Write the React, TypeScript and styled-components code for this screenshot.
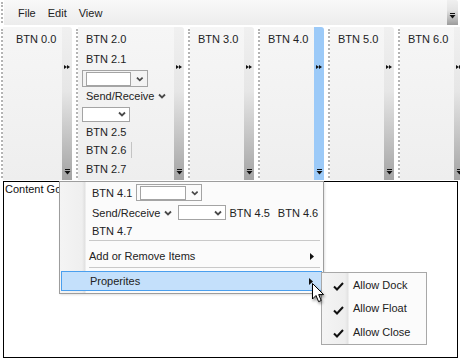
import React from "react";
import styled, { createGlobalStyle } from "styled-components";

const GlobalStyle = createGlobalStyle`
  html, body {
    margin: 0;
    padding: 0;
    background: #fff;
  }
  body {
    font-family: "Liberation Sans", Arial, sans-serif;
    font-size: 11px;
    color: #222;
  }
`;

const Page = styled.div`
  position: relative;
  width: 460px;
  height: 360px;
  overflow: hidden;
  background: #fff;
`;

/* ---------- menu bar ---------- */

const MenuBarRow = styled.div`
  display: flex;
  width: 458px;
  height: 25px;
`;

const Grip = styled.div`
  flex: 0 0 0;
  margin: 2px 0 2px 1px;
  border-left: 2px dotted #b4b4b4;
`;

const MenuBody = styled.div`
  flex: 1;
  display: flex;
  align-items: center;
  margin-left: 1px;
  padding-left: 8px;
  background: linear-gradient(#f9f9f9, #ececec);
`;

const MenuItem = styled.span`
  padding: 0 6px;
  line-height: 22px;
`;

const OverflowButton = styled.div`
  flex: 0 0 11px;
  display: flex;
  align-items: flex-end;
  justify-content: center;
  padding-bottom: 6px;
  box-sizing: border-box;
  border-radius: 0 2px 0 0;
  background: linear-gradient(#f0f0f0, #e4e4e4 40%, #9c9c9c);
`;

/* ---------- toolbars ---------- */

const Tray = styled.div`
  display: flex;
  gap: 3px;
  height: 153px;
  margin-top: 2px;
`;

const Toolbar = styled.div<{ $w: number }>`
  display: flex;
  flex: 0 0 ${(p) => p.$w}px;
`;

const ToolbarBody = styled.div<{ $inset: number }>`
  flex: 1;
  display: flex;
  flex-direction: column;
  padding: 2px 0 0 ${(p) => p.$inset}px;
  margin-left: 0;
  background: linear-gradient(#f6f6f6, #eeeeee);
`;

const OverflowColumn = styled.div<{ $active?: boolean }>`
  flex: 0 0 10px;
  display: flex;
  flex-direction: column;
  align-items: center;
  justify-content: space-between;
  padding: 38px 0 5px;
  box-sizing: border-box;
  border-radius: 0 3px 0 0;
  background: ${(p) =>
    p.$active
      ? "#9ccaf8"
      : "linear-gradient(#f0f0f0, #e6e6e6 42%, #a4a4a4)"};
`;

const Btn = styled.div<{ $h?: number }>`
  display: flex;
  align-items: center;
  gap: 3px;
  height: ${(p) => p.$h ?? 19}px;
  padding: 0 4px;
  white-space: nowrap;
`;

const ItemRow = styled.div<{ $h: number }>`
  display: flex;
  align-items: center;
  height: ${(p) => p.$h}px;
`;

const VSep = styled.span`
  width: 1px;
  height: 16px;
  margin-left: 2px;
  background: #c4c4c4;
`;

const ComboFrame = styled.div`
  display: flex;
  align-items: center;
  gap: 5px;
  width: 66px;
  height: 17px;
  box-sizing: border-box;
  padding: 0 3px;
  border: 1px solid #a4a4a4;
`;

const ComboInput = styled.div`
  width: 46px;
  height: 12px;
  background: #fff;
  border: 1px solid #a4a4a4;
`;

const SelectBox = styled.div`
  display: flex;
  align-items: center;
  justify-content: flex-end;
  width: 48px;
  height: 15px;
  box-sizing: border-box;
  padding-right: 3px;
  background: #fff;
  border: 1px solid #a4a4a4;
`;

/* ---------- content ---------- */

const Content = styled.div`
  height: 177px;
  margin: 1px 2px 0 3px;
  box-sizing: border-box;
  border: 1px solid #000;
  padding: 1px 0 0 1px;
  color: #111;
  line-height: 13px;
`;

/* ---------- overflow popup ---------- */

const Popup = styled.div`
  position: absolute;
  left: 59px;
  top: 181px;
  width: 265px;
  box-sizing: border-box;
  border: 1px solid #9d9d9d;
  padding-bottom: 2px;
  background: linear-gradient(
      to right,
      #f4f4f4 0,
      #efefef 22px,
      #e0e0e0 25px,
      #fbfbfb 26px
    );
  box-shadow: 1px 1px 2px rgba(0, 0, 0, 0.12);
`;

const PopupRows = styled.div`
  padding: 0 0 0 28px;
`;

const PopupSep = styled.div`
  height: 1px;
  margin: 0 3px 0 29px;
  background: #c9c9c9;
`;

const PopupItem = styled.div<{ $hot?: boolean }>`
  display: flex;
  align-items: center;
  justify-content: space-between;
  box-sizing: border-box;
  height: ${(p) => (p.$hot ? 20 : 26)}px;
  margin: ${(p) => (p.$hot ? "3px 1px 0" : "0")};
  padding: ${(p) => (p.$hot ? "0 8px 0 28px" : "4px 9px 0 29px")};
  border: ${(p) => (p.$hot ? "1px solid #4a9fee" : "none")};
  background: ${(p) => (p.$hot ? "#c4e0fb" : "transparent")};
`;

const SubMenu = styled.div`
  position: absolute;
  left: 321px;
  top: 272px;
  width: 106px;
  box-sizing: border-box;
  border: 1px solid #a8a8a8;
  background: linear-gradient(
      to right,
      #f4f4f4 0,
      #eeeeee 23px,
      #e2e2e2 26px,
      #fbfbfb 27px
    );
`;

const SubItem = styled.div`
  display: flex;
  align-items: center;
  height: 24px;
  margin-top: -0.5px;
`;

const CheckCell = styled.span`
  flex: 0 0 31px;
  display: flex;
  justify-content: center;
  padding-top: 4px;
  padding-left: 2px;
  box-sizing: border-box;
`;

const Cursor = styled.svg`
  position: absolute;
  left: 311px;
  top: 282px;
  filter: drop-shadow(1px 2px 1.5px rgba(0, 0, 0, 0.45));
`;

/* ---------- glyphs ---------- */

const Chevron = () => (
  <svg width="8" height="6" viewBox="0 0 8 6">
    <polyline points="1,1.5 4,4.5 7,1.5" fill="none" stroke="#4a4a4a" strokeWidth="1.8" />
  </svg>
);

const MoreGlyph = () => (
  <svg width="6" height="4" viewBox="0 0 6 4">
    <polygon points="0,0 3,2 0,4" fill="#111" />
    <polygon points="3,0 6,2 3,4" fill="#111" />
  </svg>
);

const DropGlyph = () => (
  <svg width="7" height="6" viewBox="0 0 7 6">
    <rect x="1" y="0" width="5" height="1" fill="#111" />
    <polygon points="0.5,2 6.5,2 3.5,5.5" fill="#111" />
  </svg>
);

const SubArrow = () => (
  <svg width="4" height="7" viewBox="0 0 4 7">
    <polygon points="0,0 4,3.5 0,7" fill="#111" />
  </svg>
);

const Check = () => (
  <svg width="11" height="9" viewBox="0 0 11 9">
    <polyline points="1,4.5 4,7.5 10,1" fill="none" stroke="#111" strokeWidth="2" />
  </svg>
);

const Combo = () => (
  <ComboFrame>
    <ComboInput />
    <Chevron />
  </ComboFrame>
);

const Select = () => (
  <SelectBox>
    <Chevron />
  </SelectBox>
);

const Column = ({ active }: { active?: boolean }) => (
  <OverflowColumn $active={active}>
    <MoreGlyph />
    <DropGlyph />
  </OverflowColumn>
);

const simpleBars = [
  { w: 67, label: "BTN 3.0" },
  { w: 67, label: "BTN 4.0", active: true },
  { w: 67, label: "BTN 5.0" },
  { w: 67, label: "BTN 6.0" },
];

export default function App() {
  return (
    <Page>
      <GlobalStyle />

      <MenuBarRow>
        <Grip />
        <MenuBody>
          <MenuItem>File</MenuItem>
          <MenuItem>Edit</MenuItem>
          <MenuItem>View</MenuItem>
        </MenuBody>
        <OverflowButton>
          <DropGlyph />
        </OverflowButton>
      </MenuBarRow>

      <Tray>
        <Toolbar $w={72}>
          <Grip />
          <ToolbarBody $inset={9}>
            <Btn $h={20}>BTN 0.0</Btn>
          </ToolbarBody>
          <Column />
        </Toolbar>

        <Toolbar $w={109}>
          <Grip />
          <ToolbarBody $inset={4}>
            <Btn $h={20}>BTN 2.0</Btn>
            <Btn>BTN 2.1</Btn>
            <ItemRow $h={19} style={{ alignItems: "flex-end" }}>
              <Combo />
            </ItemRow>
            <Btn $h={18}>
              Send/Receive
              <Chevron />
            </Btn>
            <ItemRow $h={18}>
              <Select />
            </ItemRow>
            <Btn $h={18}>BTN 2.5</Btn>
            <Btn $h={18}>
              BTN 2.6
              <VSep />
            </Btn>
            <Btn>BTN 2.7</Btn>
          </ToolbarBody>
          <Column />
        </Toolbar>

        {simpleBars.map((b) => (
          <Toolbar key={b.label} $w={b.w}>
            <Grip />
            <ToolbarBody $inset={4}>
              <Btn $h={20}>{b.label}</Btn>
            </ToolbarBody>
            <Column active={b.active} />
          </Toolbar>
        ))}
      </Tray>

      <Content>Content Goes Here</Content>

      <Popup>
        <PopupRows>
          <ItemRow $h={21}>
            <Btn>BTN 4.1</Btn>
            <Combo />
          </ItemRow>
          <ItemRow $h={19}>
            <Btn>
              Send/Receive
              <Chevron />
            </Btn>
            <span style={{ marginLeft: 2 }} />
            <Select />
            <Btn>BTN 4.5</Btn>
            <Btn>BTN 4.6</Btn>
          </ItemRow>
          <ItemRow $h={18}>
            <Btn>BTN 4.7</Btn>
          </ItemRow>
        </PopupRows>
        <PopupSep />
        <PopupItem>
          <span>Add or Remove Items</span>
          <SubArrow />
        </PopupItem>
        <PopupSep />
        <PopupItem $hot>
          <span>Properites</span>
          <SubArrow />
        </PopupItem>
      </Popup>

      <SubMenu>
        {["Allow Dock", "Allow Float", "Allow Close"].map((t) => (
          <SubItem key={t}>
            <CheckCell>
              <Check />
            </CheckCell>
            <span>{t}</span>
          </SubItem>
        ))}
      </SubMenu>

      <Cursor width="16" height="22" viewBox="0 0 16 22">
        <path
          d="M1.5 1.5 L1.5 17 L5 13.5 L7.6 19.6 L10.2 18.5 L7.7 12.6 L12.6 12.6 Z"
          fill="#fff"
          stroke="#000"
          strokeWidth="1"
          strokeLinejoin="round"
        />
      </Cursor>
    </Page>
  );
}
